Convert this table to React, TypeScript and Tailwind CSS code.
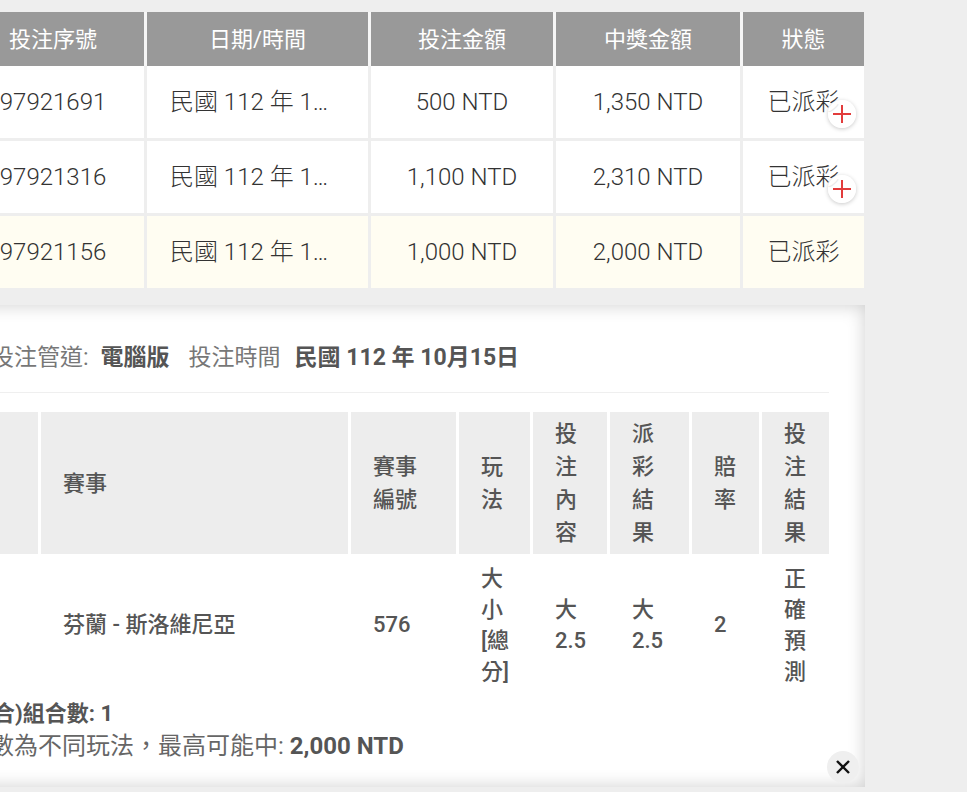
import { useState } from 'react';

const bets = [
  { id: '97921691', date: '民國 112 年 10月15日 21:30', stake: '500 NTD', win: '1,350 NTD', status: '已派彩', more: true },
  { id: '97921316', date: '民國 112 年 10月15日 21:12', stake: '1,100 NTD', win: '2,310 NTD', status: '已派彩', more: true },
  { id: '97921156', date: '民國 112 年 10月15日 20:58', stake: '1,000 NTD', win: '2,000 NTD', status: '已派彩', more: false },
];

const detailHead = ['', '賽事', '賽事編號', '玩法', '投注內容', '派彩結果', '賠率', '投注結果'];
const detailRow = ['', '芬蘭 - 斯洛維尼亞', '576', '大小[總分]', '大 2.5', '大 2.5', '2', '正確預測'];

const topCols = 'grid w-fit grid-cols-[182px_221px_182px_184px_121px] gap-x-[3px]';
const detailCols = 'grid grid-cols-[45px_307px_105px_71px_74px_79px_67px_67px] gap-x-[3px]';

function PlusButton() {
  return (
    <button
      type="button"
      aria-label="展開"
      className="absolute bottom-[10px] right-[8px] flex h-[28px] w-[28px] items-center justify-center rounded-full bg-white/90 shadow-[0_1px_4px_rgba(0,0,0,0.22)]"
    >
      <svg width="20" height="20" viewBox="0 0 20 20" fill="none" stroke="#e23c3c" strokeWidth="2">
        <line x1="10" y1="1" x2="10" y2="19" />
        <line x1="1" y1="10" x2="19" y2="10" />
      </svg>
    </button>
  );
}

export default function App() {
  const [open, setOpen] = useState(true);

  return (
    <div className="h-[792px] w-[967px] overflow-hidden bg-[#eeeeee] font-['Roboto','Noto_Sans_CJK_TC',sans-serif]">
      <div className="-ml-[38px] pt-[12px]">
        <div className={`${topCols} h-[54px] bg-[#f6f6f6] text-[22px] text-white`}>
          {['投注序號', '日期/時間', '投注金額', '中獎金額', '狀態'].map((h) => (
            <div key={h} className="flex items-center justify-center bg-[#999999]">
              {h}
            </div>
          ))}
        </div>
        <div className="flex flex-col gap-y-[3px]">
          {bets.map((b, i) => {
            const bg = i === 2 ? 'bg-[#fffdf2]' : 'bg-white';
            return (
              <div key={b.id} className={`${topCols} h-[72px] text-[24px] font-light text-[#333]`}>
                <div className={`flex items-center justify-center ${bg}`}>{b.id}</div>
                <div className={`flex min-w-0 items-center pl-[23px] pr-[32px] ${bg}`}>
                  <span className="truncate">{b.date}</span>
                </div>
                <div className={`flex items-center justify-center ${bg}`}>{b.stake}</div>
                <div className={`flex items-center justify-center ${bg}`}>{b.win}</div>
                <div className={`relative flex items-center justify-center ${bg}`}>
                  {b.status}
                  {b.more && <PlusButton />}
                </div>
              </div>
            );
          })}
        </div>
      </div>

      {open && (
        <div className="relative -ml-[43px] mt-[17px] h-[482px] w-[908px] bg-white px-[36px] shadow-[inset_0_0_18px_rgba(0,0,0,0.2)]">
          <div className="border-b border-[#efefef] pb-[20px] pt-[39px]">
            <p className="-ml-[2px] text-[23px] leading-[28px] text-[#777]">
              <span>投注管道:</span>
              <span className="ml-[12px] font-bold text-[#555]">電腦版</span>
              <span className="ml-[19px]">投注時間</span>
              <span className="ml-[14px] font-bold text-[#555]">民國 112 年 10月15日</span>
            </p>
          </div>

          <div className="mt-[19px]">
            <div className={`${detailCols} h-[142px]`}>
              {detailHead.map((h, i) => (
                <div
                  key={i}
                  className="flex items-center bg-[#ededed] pl-[22px] pr-[20px] text-[22px] font-medium leading-[33px] text-[#555]"
                >
                  <span>{h}</span>
                </div>
              ))}
            </div>
            <div className={`${detailCols} h-[141px]`}>
              {detailRow.map((d, i) => (
                <div
                  key={i}
                  className="flex items-center pl-[22px] pr-[20px] text-[22px] font-medium leading-[31px] text-[#555]"
                >
                  <span>{d}</span>
                </div>
              ))}
            </div>
          </div>

          <div className="pt-[2px] leading-[33px] text-[#666]">
            <p className="text-[22px] font-bold text-[#555]">合)組合數: 1</p>
            <p className="-ml-[3px] text-[24px]">
              數為不同玩法，最高可能中: <span className="font-bold text-[#555]">2,000 NTD</span>
            </p>
          </div>

          <button
            type="button"
            aria-label="關閉"
            onClick={() => setOpen(false)}
            className="absolute bottom-[4px] right-[6px] flex h-[32px] w-[32px] items-center justify-center rounded-full bg-[#efefef]"
          >
            <svg width="16" height="16" viewBox="0 0 16 16" stroke="#111" strokeWidth="2.4">
              <line x1="2" y1="2" x2="14" y2="14" />
              <line x1="14" y1="2" x2="2" y2="14" />
            </svg>
          </button>
        </div>
      )}
    </div>
  );
}
